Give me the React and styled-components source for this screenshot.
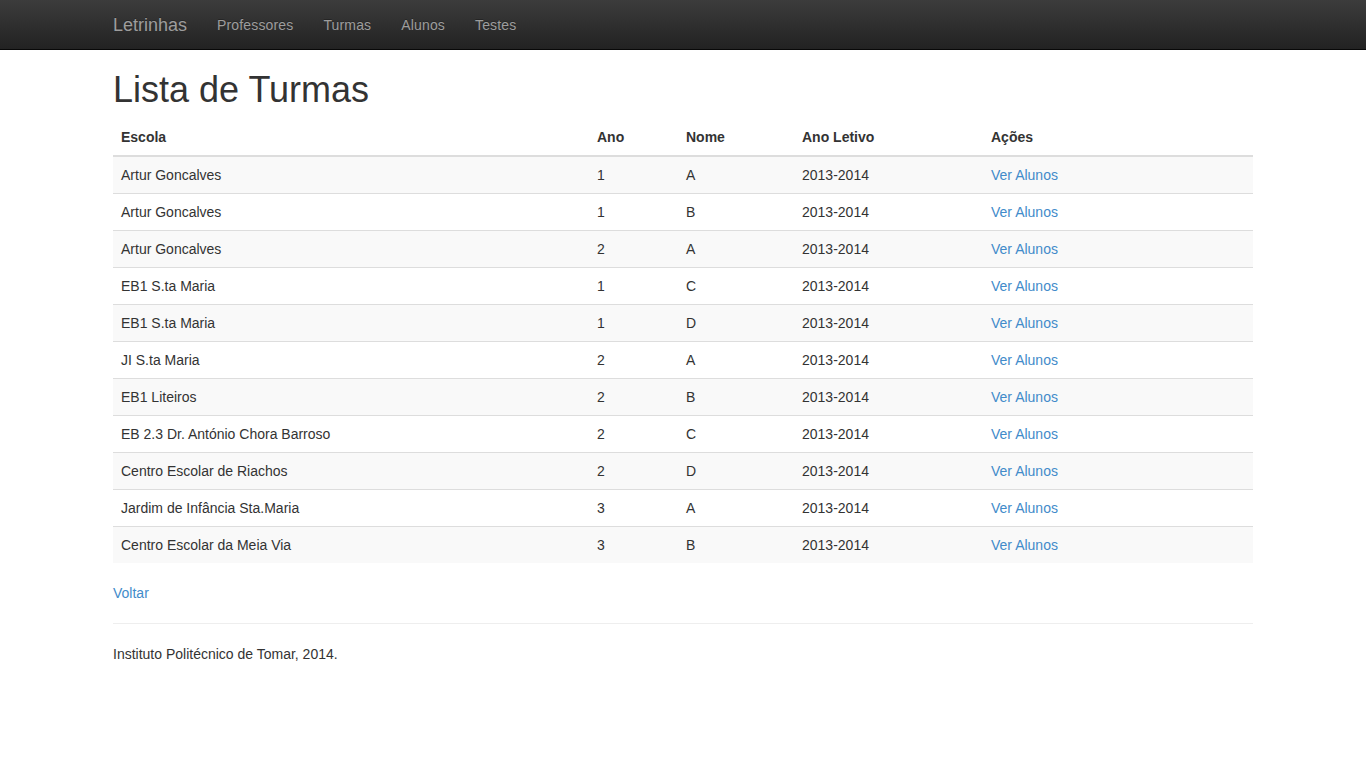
import React from "react";
import styled, { createGlobalStyle } from "styled-components";

const GlobalStyle = createGlobalStyle`
    * { box-sizing: border-box; }
    body {
        margin: 0;
        font-family: "Liberation Sans", Arial, sans-serif;
        font-size: 14px;
        line-height: 1.428571429;
        color: #333;
        background: #fff;
    }
    a { color: #428bca; text-decoration: none; }
`;

const Navbar = styled.nav`
    height: 50px;
    background-image: linear-gradient(to bottom, #3c3c3c 0%, #222 100%);
    border-bottom: 1px solid #080808;
`;

const Container = styled.div`
    width: 1170px;
    margin: 0 auto;
    padding: 0 15px;
`;

const NavInner = styled(Container)`
    display: flex;
    align-items: stretch;
    height: 100%;
`;

const Brand = styled.a`
    font-size: 18px;
    line-height: 20px;
    padding: 15px 15px 14px 0;
    color: #9d9d9d;
    text-shadow: 0 -1px 0 rgba(0, 0, 0, 0.25);
`;

const NavLink = styled.a`
    line-height: 20px;
    padding: 15px 15px 14px;
    color: #9d9d9d;
    letter-spacing: 0.15px;
    text-shadow: 0 -1px 0 rgba(0, 0, 0, 0.25);
`;

const Title = styled.h1`
    font-size: 36px;
    font-weight: 500;
    line-height: 1.1;
    margin: 20px 0 10px;
`;

const Table = styled.table`
    width: 100%;
    border-collapse: collapse;
    border-spacing: 0;
    margin-bottom: 20px;
`;

const Th = styled.th`
    text-align: left;
    padding: 7px 8px 8px;
    line-height: 20px;
    border-bottom: 2px solid #ddd;
    width: ${p => p.w}px;
`;

const Row = styled.tr`
    background: ${p => (p.odd ? "#f9f9f9" : "#fff")};
`;

const Td = styled.td`
    padding: 8px;
    line-height: 20px;
    vertical-align: top;
    border-top: 1px solid #ddd;
`;

const Footer = styled.footer`
    hr {
        margin: 20px 0;
        border: 0;
        border-top: 1px solid #eee;
    }
    p { margin: 0 0 10px; }
`;

const rows = [
    ["Artur Goncalves", "1", "A"],
    ["Artur Goncalves", "1", "B"],
    ["Artur Goncalves", "2", "A"],
    ["EB1 S.ta Maria", "1", "C"],
    ["EB1 S.ta Maria", "1", "D"],
    ["JI S.ta Maria", "2", "A"],
    ["EB1 Liteiros", "2", "B"],
    ["EB 2.3 Dr. António Chora Barroso", "2", "C"],
    ["Centro Escolar de Riachos", "2", "D"],
    ["Jardim de Infância Sta.Maria", "3", "A"],
    ["Centro Escolar da Meia Via", "3", "B"],
];

export default function App() {
    return (
        <>
            <GlobalStyle />
            <Navbar>
                <NavInner>
                    <Brand href="#">Letrinhas</Brand>
                    <NavLink href="#">Professores</NavLink>
                    <NavLink href="#">Turmas</NavLink>
                    <NavLink href="#">Alunos</NavLink>
                    <NavLink href="#">Testes</NavLink>
                </NavInner>
            </Navbar>
            <Container>
                <Title>Lista de Turmas</Title>
                <Table>
                    <thead>
                        <tr>
                            <Th w={476}>Escola</Th>
                            <Th w={89}>Ano</Th>
                            <Th w={116}>Nome</Th>
                            <Th w={189}>Ano Letivo</Th>
                            <Th w={270}>Ações</Th>
                        </tr>
                    </thead>
                    <tbody>
                        {rows.map((r, i) => (
                            <Row key={i} odd={i % 2 === 0}>
                                <Td>{r[0]}</Td>
                                <Td>{r[1]}</Td>
                                <Td>{r[2]}</Td>
                                <Td>2013-2014</Td>
                                <Td><a href="#">Ver Alunos</a></Td>
                            </Row>
                        ))}
                    </tbody>
                </Table>
                <a href="#">Voltar</a>
                <Footer>
                    <hr />
                    <p>Instituto Politécnico de Tomar, 2014.</p>
                </Footer>
            </Container>
        </>
    );
}
